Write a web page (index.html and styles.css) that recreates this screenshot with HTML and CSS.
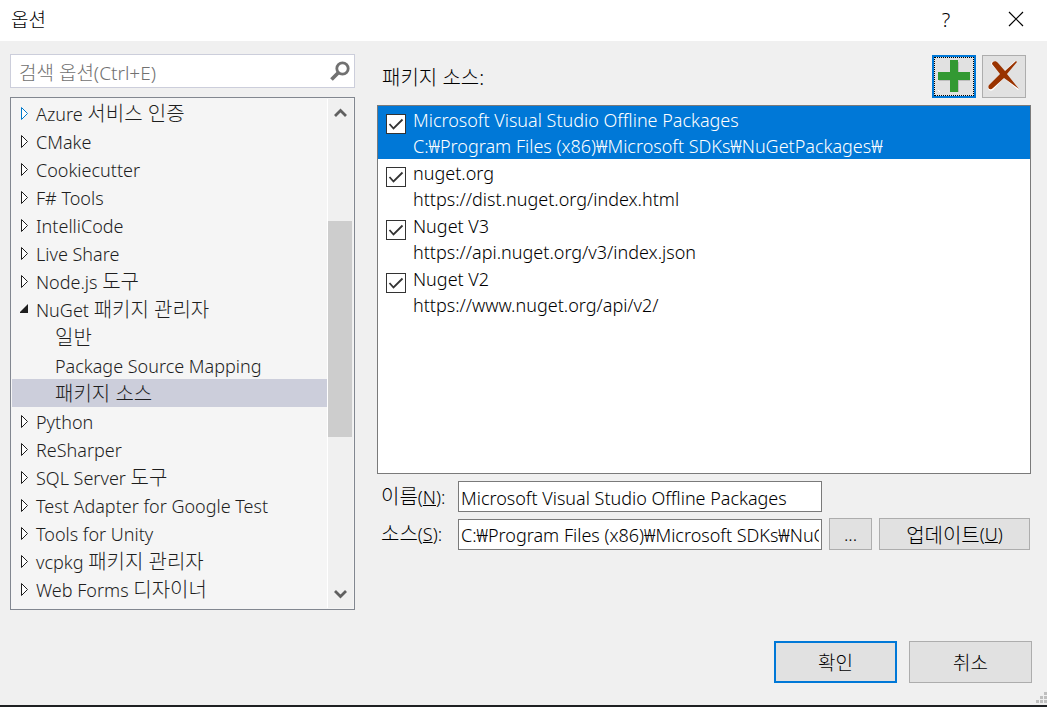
FILE: index.html
```html
<!DOCTYPE html>
<html lang="ko">
<head>
  <meta charset="UTF-8" />
  <meta name="viewport" content="width=device-width, initial-scale=1.0"/>
  <title>옵션</title>
  <link rel="stylesheet" href="styles.css">
</head>
<body>
  <div class="dialog">
    <header class="titlebar">
      <h1>옵션</h1>
      <button class="title-button" aria-label="도움말">?</button>
      <button class="title-button" aria-label="닫기">
        <svg width="16" height="16" viewBox="0 0 16 16"><path d="M1 1L15 15M15 1L1 15" stroke="#000" stroke-width="1.2" fill="none"/></svg>
      </button>
    </header>

    <div class="content">
      <div class="sidebar">
        <div class="search">
          <input type="text" placeholder="검색 옵션(Ctrl+E)" aria-label="검색 옵션" />
          <svg width="20" height="20" viewBox="0 0 20 20"><circle cx="12.5" cy="7.5" r="5.7" fill="none" stroke="#717171" stroke-width="2.8"/><path d="M8.5 11.5L1.5 18.5" stroke="#717171" stroke-width="3.8"/></svg>
        </div>

        <div class="tree-box">
          <ul class="tree">
            <li><a href="#" class="closed first">Azure <span class="ko">서비스 인증</span></a></li>
            <li><a href="#" class="closed">CMake</a></li>
            <li><a href="#" class="closed">Cookiecutter</a></li>
            <li><a href="#" class="closed">F# Tools</a></li>
            <li><a href="#" class="closed">IntelliCode</a></li>
            <li><a href="#" class="closed">Live Share</a></li>
            <li><a href="#" class="closed">Node.js <span class="ko">도구</span></a></li>
            <li>
              <a href="#" class="open">NuGet <span class="ko">패키지 관리자</span></a>
              <ul>
                <li><a href="#"><span class="ko">일반</span></a></li>
                <li><a href="#">Package Source Mapping</a></li>
                <li><a href="#" class="selected"><span class="ko">패키지 소스</span></a></li>
              </ul>
            </li>
            <li><a href="#" class="closed">Python</a></li>
            <li><a href="#" class="closed">ReSharper</a></li>
            <li><a href="#" class="closed">SQL Server <span class="ko">도구</span></a></li>
            <li><a href="#" class="closed">Test Adapter for Google Test</a></li>
            <li><a href="#" class="closed">Tools for Unity</a></li>
            <li><a href="#" class="closed">vcpkg <span class="ko">패키지 관리자</span></a></li>
            <li><a href="#" class="closed">Web Forms <span class="ko">디자이너</span></a></li>
          </ul>
          <div class="scrollbar">
            <button aria-label="위로"><svg width="13" height="10" viewBox="0 0 13 10"><path d="M1 8L6.500 2.500L12 8" fill="none" stroke="#606060" stroke-width="2.800"/></svg></button>
            <div class="track">
              <div class="thumb"></div>
            </div>
            <button aria-label="아래로"><svg width="13" height="10" viewBox="0 0 13 10"><path d="M1 2L6.500 7.500L12 2" fill="none" stroke="#606060" stroke-width="2.800"/></svg></button>
          </div>
        </div>
      </div>

      <div class="main">
        <div class="toolbar">
          <h2>패키지 소스:</h2>
          <button class="button tool add" aria-label="추가">
            <svg width="34" height="35" viewBox="0 0 34 35"><path d="M14 3H22V14H33V22H22V33H14V22H2V14H14Z" fill="#bdbdbd"/><path d="M13 1H21V13H33V21H21V33H13V21H1V13H13Z" fill="#339933"/><path d="M1 31L3 33" stroke="#fff"/></svg>
          </button>
          <button class="button tool" aria-label="제거">
            <svg width="34" height="35" viewBox="0 0 34 35"><path d="M4 5C4 2 8 1 10 4L17 12L28 2L30 3L20 15L32 30L31 31L17 19L6 31C3 33-1 30 2 26L13 15Z" fill="#fff"/><path d="M5 5C5 2 9 1 11 4L18 12L29 2L30 3L20 15L32 30L17 19L6 29C3 32 0 29 2 26L13 15Z" fill="#993300"/></svg>
          </button>
        </div>

        <ul class="sources">
          <li class="selected">
            <input type="checkbox" id="source1" checked />
            <label for="source1">Microsoft Visual Studio Offline Packages<br>C:₩Program Files (x86)₩Microsoft SDKs₩NuGetPackages₩</label>
          </li>
          <li>
            <input type="checkbox" id="source2" checked />
            <label for="source2">nuget.org<br>https://dist.nuget.org/index.html</label>
          </li>
          <li>
            <input type="checkbox" id="source3" checked />
            <label for="source3">Nuget V3<br>https://api.nuget.org/v3/index.json</label>
          </li>
          <li>
            <input type="checkbox" id="source4" checked />
            <label for="source4">Nuget V2<br>https://www.nuget.org/api/v2/</label>
          </li>
        </ul>

        <div class="fields">
          <label for="name"><span class="ko">이름</span>(<u>N</u>):</label>
          <input type="text" id="name" value="Microsoft Visual Studio Offline Packages" />
          <label class="source-label" for="source"><span class="ko">소스</span>(<u>S</u>):</label>
          <input type="text" id="source" value="C:₩Program Files (x86)₩Microsoft SDKs₩NuGetPackages₩" />
          <button class="button">...</button>
          <button class="button"><span class="ko">업데이트</span>(<u>U</u>)</button>
        </div>
      </div>
    </div>

    <footer class="footer">
      <button class="button default">확인</button>
      <button class="button">취소</button>
      <svg class="grip" width="11" height="11" viewBox="0 0 11 11"><path d="M8 0h3v3h-3zM4 4h3v3h-3zM8 4h3v3h-3zM0 8h3v3h-3zM4 8h3v3h-3zM8 8h3v3h-3z" fill="#bfbfbf"/></svg>
    </footer>
  </div>
</body>
</html>
```

FILE: styles.css
```css
* {
  box-sizing: border-box;
}

body {
  margin: 0;
  font-family: "Noto Sans", "Noto Sans CJK KR", sans-serif;
  font-size: 18px;
  font-weight: 300;
  color: #000;
  background-color: #1e2022;
}

button, input {
  font: inherit;
  color: inherit;
}

h1, h2, ul {
  margin: 0;
  padding: 0;
  font-size: 20px;
  font-weight: 300;
  list-style: none;
}

h1 {
  font-size: 19px;
}

.ko {
  font-size: 20px;
}

.dialog {
  display: flex;
  flex-direction: column;
  min-height: calc(100vh - 2px);
  background-color: #f0f0f0;
}

.titlebar {
  display: flex;
  align-items: center;
  height: 41px;
  padding: 0 0 3px 11px;
  background-color: #fff;
}

.titlebar h1 {
  flex: 1;
}

.title-button {
  display: flex;
  align-items: center;
  justify-content: center;
  width: 62px;
  height: 36px;
  padding: 0;
  border: none;
  background: none;
}

.title-button:first-of-type {
  width: 78px;
  font-size: 20px;
}

.content {
  display: flex;
  flex: 1;
  gap: 22px;
  padding: 13px 16px 0 10px;
}

.sidebar {
  display: flex;
  flex-direction: column;
  flex: none;
  gap: 9px;
  width: 345px;
}

.search {
  display: flex;
  align-items: center;
  height: 34px;
  padding: 0 4px 0 8px;
  border: 1px solid #cccedb;
  background-color: #fff;
}

.search input {
  flex: 1;
  min-width: 0;
  padding: 3px 0 0;
  border: none;
  outline: none;
  font-size: 19px;
}

.search input::placeholder {
  color: #717171;
  opacity: 1;
}

.tree-box {
  display: flex;
  flex: 1;
  padding: 1px;
  border: 1px solid #828790;
  background-color: #f5f5f5;
}

.tree-box ul {
  font-size: 18px;
}

.tree {
  flex: 1;
}

.tree a {
  display: flex;
  align-items: center;
  height: 28px;
  padding: 2px 0 0 8px;
  color: #1e1e1e;
  line-height: 26px;
  text-decoration: none;
  white-space: pre;
}

.tree a::before {
  content: "";
  width: 16px;
  height: 16px;
  background-repeat: no-repeat;
}

.tree .closed::before {
  background-image: url("data:image/svg+xml,%3Csvg xmlns='http://www.w3.org/2000/svg' width='9' height='16'%3E%3Cpath d='M1.500 1.500v12L7.500 7.500z' fill='white' stroke='%231e1e1e'/%3E%3C/svg%3E");
}

.tree .first::before {
  background-image: url("data:image/svg+xml,%3Csvg xmlns='http://www.w3.org/2000/svg' width='9' height='16'%3E%3Cpath d='M1.500 1.500v12L7.500 7.500z' fill='white' stroke='%23007acc'/%3E%3C/svg%3E");
}

.tree .open::before {
  background-image: url("data:image/svg+xml,%3Csvg xmlns='http://www.w3.org/2000/svg' width='9' height='16'%3E%3Cpath d='M8 2v9H-1z' fill='%231e1e1e'/%3E%3C/svg%3E");
}

.tree ul a {
  padding-left: 43px;
}

.tree ul a::before {
  display: none;
}

.tree .selected {
  background-color: #cccedb;
}

.scrollbar {
  display: flex;
  flex-direction: column;
  width: 26px;
  padding-right: 1px;
  border-left: 1px solid #fff;
  background-color: #f0f0f0;
}

.scrollbar button {
  display: flex;
  align-items: center;
  justify-content: center;
  height: 28px;
  padding: 0;
  border: none;
  background: none;
}

.track {
  flex: 1;
  padding: 94px 0 143px;
}

.thumb {
  height: 100%;
  background-color: #cdcdcd;
}

.main {
  display: flex;
  flex-direction: column;
  flex: 1;
  min-width: 0;
  padding-bottom: 60px;
}

.toolbar {
  display: flex;
  align-items: center;
  gap: 6px;
  padding: 1px 5px 7px;
}

.toolbar h2 {
  flex: 1;
}

.button {
  display: flex;
  align-items: center;
  justify-content: center;
  padding: 0;
  border: 1px solid #adadad;
  background-color: #e1e1e1;
  white-space: pre;
}

.tool {
  width: 44px;
  height: 43px;
}

.add {
  border: 2px solid #0078d7;
  outline: 1px dotted #000;
  outline-offset: -3px;
}

.sources {
  flex: 1;
  border: 1px solid #7a7a7a;
  background-color: #fff;
}

.sources li {
  display: flex;
  gap: 7px;
  height: 53px;
  padding: 1px 0 0 8px;
  font-size: 18px;
  line-height: 26px;
  white-space: nowrap;
}

.sources .selected {
  color: #fff;
  background-color: #0078d7;
}

.sources input {
  appearance: none;
  width: 20px;
  height: 20px;
  margin: 7px 0 0;
  border: 1px solid #333;
  background-color: #fff;
}

.sources input:checked {
  background-image: url("data:image/svg+xml,%3Csvg xmlns='http://www.w3.org/2000/svg' width='18' height='18'%3E%3Cpath d='M2.500 9L6.500 13.500L15.500 4.500' fill='none' stroke='%23333' stroke-width='1.800'/%3E%3C/svg%3E");
}

.fields {
  display: grid;
  grid-template-columns: 70px 1fr 43px 151px;
  column-gap: 7px;
  row-gap: 6px;
  align-items: center;
  padding: 7px 1px 0 4px;
}

.fields label {
  line-height: 30px;
}

.fields input {
  min-width: 0;
  height: 31px;
  padding: 2px 2px 0;
  border: 1px solid #7a7a7a;
  background-color: #fff;
}

.source-label {
  grid-column: 1;
}

.fields .button {
  height: 32px;
}

.footer {
  display: flex;
  justify-content: flex-end;
  gap: 12px;
  position: relative;
  padding: 31px 15px 22px;
}

.footer .button {
  width: 123px;
  height: 42px;
  font-size: 19px;
}

.footer .default {
  border: 2px solid #0078d7;
}

.grip {
  position: absolute;
  right: 0;
  bottom: 2px;
}
```
